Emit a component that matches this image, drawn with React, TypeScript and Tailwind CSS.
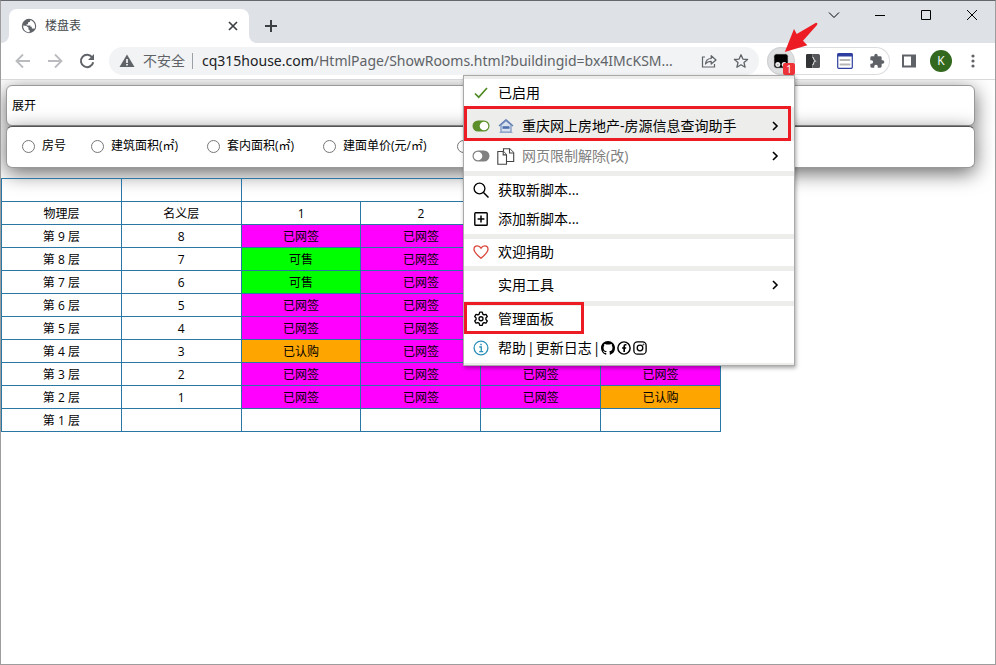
import type { ReactNode } from "react";

type Room = "sold" | "free" | "booked" | "none";

const LABEL: Record<Room, string> = { sold: "已网签", free: "可售", booked: "已认购", none: "" };
const TONE: Record<Room, string> = {
  sold: "bg-[#ff00ff]",
  free: "bg-[#00ff00]",
  booked: "bg-[#ffa500]",
  none: "",
};

const FLOORS: { floor: number; name: string; rooms: Room[] }[] = [
  { floor: 9, name: "8", rooms: ["sold", "sold", "sold", "sold"] },
  { floor: 8, name: "7", rooms: ["free", "sold", "sold", "sold"] },
  { floor: 7, name: "6", rooms: ["free", "sold", "sold", "sold"] },
  { floor: 6, name: "5", rooms: ["sold", "sold", "sold", "sold"] },
  { floor: 5, name: "4", rooms: ["sold", "sold", "sold", "sold"] },
  { floor: 4, name: "3", rooms: ["booked", "sold", "sold", "sold"] },
  { floor: 3, name: "2", rooms: ["sold", "sold", "sold", "sold"] },
  { floor: 2, name: "1", rooms: ["sold", "sold", "sold", "booked"] },
  { floor: 1, name: "", rooms: ["none", "none", "none", "none"] },
];

const FIELDS = [
  { text: "房号", width: "min-w-6" },
  { text: "建筑面积(㎡)", width: "min-w-[71px]" },
  { text: "套内面积(㎡)", width: "min-w-[71px]" },
  { text: "建面单价(元/㎡)", width: "min-w-[89px]" },
];

const CELL = "h-[23px] border border-[#2a76a4] p-0 text-center font-normal";
const CARD =
  "rounded-md border border-[#999] bg-white shadow-[0_5px_20px_rgba(0,0,0,0.6)]";

function Svg({ size, box = 16, children }: { size: string; box?: number; children: ReactNode }) {
  return (
    <svg className={`${size} shrink-0`} viewBox={`0 0 ${box} ${box}`} fill="none" stroke="currentColor" aria-hidden="true">
      {children}
    </svg>
  );
}

function TabStrip() {
  return (
    <div className="flex h-[42px] items-end bg-[#dee1e6]">
      <div className="h-2 w-2 bg-white">
        <div className="h-2 w-2 rounded-br-lg bg-[#dee1e6]" />
      </div>
      <div className="flex h-[34px] w-[240px] items-center rounded-t-lg bg-white pl-3 pr-2">
        <svg className="size-4 shrink-0" viewBox="0 0 16 16" aria-hidden="true">
          <circle cx="8" cy="8" r="7.2" fill="#5f6368" />
          <path d="M2.2 7.4 5.4 8 7.6 9.8 7.4 11.6 8.6 12v2.2C5.2 14.4 1.9 11.6 2.2 7.4ZM9.4 2 9 3.8 7 4.4v1.8H5.6v1.2h3.8v1.4h1.4v1.6h1.6l1.2.4c1.2-2.8.2-7-4.2-8.8Z" fill="#fff" />
        </svg>
        <span className="ml-2 flex-1 text-xs text-[#45474a]">楼盘表</span>
        <button type="button" aria-label="关闭标签页" className="flex size-4 items-center justify-center text-[#3c4043]">
          <Svg size="size-[10px]" box={10}>
            <path d="m1 1 8 8M9 1 1 9" strokeWidth="1.7" />
          </Svg>
        </button>
      </div>
      <div className="h-2 w-2 bg-white">
        <div className="h-2 w-2 rounded-bl-lg bg-[#dee1e6]" />
      </div>
      <button type="button" aria-label="新标签页" className="ml-2 flex h-[34px] w-3 items-center justify-center text-[#3c4043]">
        <Svg size="size-3" box={12}>
          <path d="M6 0v12M0 6h12" strokeWidth="2" />
        </Svg>
      </button>
      <div className="ml-auto flex self-start text-black">
        <button type="button" aria-label="搜索标签页" className="flex h-7 w-[46px] items-center justify-center">
          <Svg size="size-3" box={12}>
            <path d="m1 3.5 5 5 5-5" />
          </Svg>
        </button>
        <button type="button" aria-label="最小化" className="flex h-7 w-[46px] items-center justify-center">
          <Svg size="size-[10px]" box={10}>
            <path d="M0 5.5h10" />
          </Svg>
        </button>
        <button type="button" aria-label="最大化" className="flex h-7 w-[46px] items-center justify-center">
          <Svg size="size-[10px]" box={10}>
            <path d="M.5.5h9v9h-9z" />
          </Svg>
        </button>
        <button type="button" aria-label="关闭" className="flex h-7 w-[46px] items-center justify-center">
          <Svg size="size-[10px]" box={10}>
            <path d="m0 0 10 10M10 0 0 10" />
          </Svg>
        </button>
      </div>
    </div>
  );
}

function Chevron() {
  return (
    <span className="ml-auto mr-[14px] flex">
      <Svg size="size-[10px]" box={10}>
        <path d="m3 1 4 4-4 4" strokeWidth="1.6" />
      </Svg>
    </span>
  );
}

function Toggle({ on }: { on?: boolean }) {
  return (
    <svg className="h-3 w-[18px] shrink-0" viewBox="0 0 18 12" aria-hidden="true">
      <rect x=".5" y=".5" width="17" height="11" rx="5.5" fill={on ? "#5a8f29" : "#808080"} />
      <circle cx={on ? 12 : 6} cy="6" r="4.3" fill="#fff" />
    </svg>
  );
}

const ITEM = "flex w-full items-center text-left";
const RULE = "h-[5px] border-0 bg-[#ededeb]";

function ScriptMenu() {
  return (
    <div className="absolute right-0 top-full z-20 w-[332px] border border-[#aaa] bg-white text-sm leading-5 text-black shadow-[1px_2px_4px_rgba(0,0,0,0.35)]">
      <div className="h-[3px] bg-[#ededeb]" />
      <button type="button" className={`${ITEM} h-7 gap-[10px] pl-[10px]`}>
        <span className="text-[#4f8a24]">
          <Svg size="size-[14px]" box={14}>
            <path d="m1 7.5 3.7 3.7L13 2" strokeWidth="1.7" />
          </Svg>
        </span>
        已启用
      </button>
      <button type="button" className={`${ITEM} relative h-[34px] bg-[#ededeb] pl-2 pt-1`}>
        <Toggle on />
        <svg className="ml-2 size-4 shrink-0" viewBox="0 0 16 16" fill="none" aria-hidden="true">
          <path d="M3 6.800v7.400h10V6.800L8 2.500z" fill="#d9e1ee" stroke="#7f98c4" strokeWidth="1.300" strokeLinejoin="round" />
          <path d="M1 8 8 1.800 15 8" stroke="#6582b5" strokeWidth="1.500" strokeLinejoin="round" />
          <path d="M4.500 9.500h7" stroke="#4d70ad" strokeWidth="2.600" />
          <path d="M1.500 14.500h13" stroke="#8fa5cb" />
        </svg>
        <span className="ml-2">重庆网上房地产-房源信息查询助手</span>
        <Chevron />
        <span className="pointer-events-none absolute -top-px left-0 h-[35px] w-[327px] border-[3px] border-[#ed1c24]" />
      </button>
      <button type="button" className={`${ITEM} h-[30px] pl-2`}>
        <Toggle />
        <svg className="ml-[7px] h-[17px] w-[18px] shrink-0" viewBox="0 0 18 17" fill="#fff" stroke="#444" strokeWidth="1.1" aria-hidden="true">
          <path d="M6.500.8h6.200l4 4v8.700H6.500z" />
          <path d="M12.500.8v4.200h4.200" />
          <path d="M.8 3.500h5.500l3.200 3.300v9.400H.8z" />
          <path d="M6.200 3.500v3.400h3.300" />
        </svg>
        <span className="ml-[7px] text-[#808080]">网页限制解除(改)</span>
        <Chevron />
      </button>
      <hr className={RULE} />
      <button type="button" className={`${ITEM} h-[29px] gap-[9px] pb-0.5 pl-[9px]`}>
        <Svg size="size-4">
          <circle cx="6.5" cy="6.5" r="5.4" strokeWidth="1.3" />
          <path d="m10.500 10.500 5 5" strokeWidth="1.5" />
        </Svg>
        获取新脚本...
      </button>
      <button type="button" className={`${ITEM} h-[29px] gap-[9px] pb-0.5 pl-[9px]`}>
        <Svg size="size-4">
          <rect x="1.8" y="1.8" width="12.4" height="12.4" rx=".8" strokeWidth="1.4" />
          <path d="M8 4.600v6.800M4.600 8h6.800" strokeWidth="1.5" />
        </Svg>
        添加新脚本...
      </button>
      <hr className={RULE} />
      <button type="button" className={`${ITEM} h-[27px] gap-[9px] pb-0.5 pl-[9px]`}>
        <span className="text-[#d9453a]">
          <Svg size="size-4">
            <path d="M8 14.200C4.500 11.200 1 8.500 1 5.200 1 3.200 2.500 1.800 4.300 1.800c1.600 0 2.900.9 3.700 2.300.8-1.400 2.100-2.300 3.700-2.300C13.500 1.800 15 3.200 15 5.200c0 3.300-3.500 6-7 9Z" strokeWidth="1.3" />
          </Svg>
        </span>
        欢迎捐助
      </button>
      <hr className={RULE} />
      <button type="button" className={`${ITEM} h-[30px] pb-0.5 pl-[34px]`}>
        实用工具
        <Chevron />
      </button>
      <hr className={RULE} />
      <button type="button" className={`${ITEM} relative h-7 gap-[9px] pb-0.5 pl-[9px]`}>
        <Svg size="size-4">
          <path d="M6.700 1.200h2.600l.5 1.900 1.300.8 1.900-.6 1.300 2.300-1.400 1.300v1.700l1.400 1.300-1.300 2.300-1.900-.6-1.300.8-.5 1.900H6.700l-.5-1.900-1.300-.8-1.900.6-1.300-2.300 1.400-1.300V6.900L1.700 5.600 3 3.300l1.900.6 1.300-.8z" strokeWidth="1.3" strokeLinejoin="round" />
          <circle cx="8" cy="7.75" r="2" strokeWidth="1.3" />
        </Svg>
        管理面板
        <span className="pointer-events-none absolute -top-1 left-0 h-8 w-[120px] border-[3px] border-[#ed1c24]" />
      </button>
      <div className={`${ITEM} h-[29px] pb-0.5 pl-[9px]`}>
        <span className="mr-[9px] text-[#2b8fb8]">
          <Svg size="size-4">
            <circle cx="8" cy="8" r="6.9" strokeWidth="1.3" />
            <path d="M6.300 7H8.300v4.500M6.200 11.700h4" strokeWidth="1.3" />
            <path d="M7.300 4.500h1.500" strokeWidth="1.5" />
          </Svg>
        </span>
        <a href="#help">帮助</a>
        <span className="mx-px">|</span>
        <a href="#changelog">更新日志</a>
        <span className="mx-px">|</span>
        <span className="flex gap-0.5">
          <a href="#github" aria-label="GitHub">
            <svg className="size-[14px]" viewBox="0 0 16 16" fill="currentColor" aria-hidden="true">
              <path d="M8 0C3.580 0 0 3.580 0 8c0 3.540 2.290 6.530 5.470 7.590.4.070.55-.17.55-.38 0-.19-.01-.82-.01-1.490-2.010.37-2.530-.49-2.690-.94-.09-.23-.48-.94-.82-1.130-.28-.15-.68-.52-.01-.53.63-.01 1.080.58 1.230.82.72 1.210 1.870.87 2.330.66.070-.52.28-.87.51-1.070-1.780-.2-3.640-.89-3.640-3.950 0-.87.31-1.590.82-2.150-.08-.2-.36-1.020.08-2.120 0 0 .67-.21 2.200.82.640-.18 1.320-.27 2-.27s1.360.09 2 .27c1.530-1.040 2.200-.82 2.200-.82.44 1.100.16 1.920.08 2.120.51.56.82 1.270.82 2.150 0 3.070-1.870 3.750-3.650 3.950.29.25.54.73.54 1.480 0 1.070-.01 1.930-.01 2.200 0 .21.15.46.55.38A8.010 8.010 0 0 0 16 8c0-4.420-3.580-8-8-8Z" />
            </svg>
          </a>
          <a href="#facebook" aria-label="Facebook">
            <Svg size="size-[14px]">
              <circle cx="8" cy="8" r="7" strokeWidth="1.7" />
              <path d="M10.800 4.300H9.700c-1 0-1.500.6-1.500 1.600v6.800M5.800 8h4.700" strokeWidth="1.9" />
            </Svg>
          </a>
          <a href="#instagram" aria-label="Instagram">
            <Svg size="size-[14px]">
              <rect x="1" y="1" width="14" height="14" rx="4" strokeWidth="1.5" />
              <circle cx="8" cy="8" r="3.2" strokeWidth="1.5" />
              <circle cx="12" cy="4" r=".6" strokeWidth=".8" />
            </Svg>
          </a>
        </span>
      </div>
      <div className="h-0.5 bg-[#ededeb]" />
    </div>
  );
}

function Toolbar() {
  return (
    <div className="flex h-[37px] items-center border-b border-[#d8d9db] bg-white pr-[14px] text-[#5f6368]">
      <button type="button" aria-label="后退" className="ml-[14px] text-[#b9bbbe]">
        <Svg size="size-4">
          <path d="M15 8H2M8 1.500 1.500 8 8 14.500" strokeWidth="1.8" />
        </Svg>
      </button>
      <button type="button" aria-label="前进" className="ml-4 text-[#b9bbbe]">
        <Svg size="size-4">
          <path d="M1 8h13M8 1.500 14.500 8 8 14.500" strokeWidth="1.8" />
        </Svg>
      </button>
      <button type="button" aria-label="重新加载" className="ml-4">
        <Svg size="size-4">
          <path d="M13.300 4.500A6.200 6.200 0 1 0 14.200 9.200" strokeWidth="2" />
          <path d="M15 1v6H9z" fill="currentColor" stroke="none" />
        </Svg>
      </button>
      <div className="ml-[14px] flex h-7 min-w-0 flex-1 items-center rounded-full bg-[#f1f3f4] px-[10px] text-sm">
        <svg className="size-4 shrink-0" viewBox="0 0 16 16" aria-hidden="true">
          <path d="M8 1.500 15.500 14H.5z" fill="#5f6368" />
          <path d="M8 6v4M8 11v1.600" stroke="#fff" strokeWidth="1.6" />
        </svg>
        <span className="ml-2 shrink-0">不安全</span>
        <span className="ml-[7px] h-4 w-px bg-[#9aa0a6]" />
        <span className="ml-[9px] min-w-0 flex-1 whitespace-nowrap font-['Noto_Sans','Noto_Sans_CJK_SC',sans-serif]">
          <span className="text-[#202124]">cq315house.com</span>
          /HtmlPage/ShowRooms.html?buildingid=bx4IMcKSM...
        </span>
        <button type="button" aria-label="分享">
          <Svg size="size-4">
            <path d="M4 4H1.500v10h12v-3" strokeWidth="1.2" />
            <path d="M4.500 11c.3-3.500 2.500-5.400 5.700-5.500V2.700L15 7l-4.800 4V8.400C7.600 8.300 5.800 9.200 4.500 11Z" strokeWidth="1.2" strokeLinejoin="round" />
          </Svg>
        </button>
        <button type="button" aria-label="加入书签" className="ml-4">
          <Svg size="size-4">
            <path d="m8 1.800 1.900 4.300 4.700.4-3.600 3.100 1.100 4.600L8 11.800l-4.100 2.400L5 9.600 1.400 6.500l4.700-.4z" strokeWidth="1.3" strokeLinejoin="round" />
          </Svg>
        </button>
      </div>
      <div className="ml-2 flex h-7 items-center rounded-full shadow-[inset_0_0_0_1px_#dadce0]">
        <div className="relative">
          <button type="button" aria-label="脚本管理器" className="relative flex size-7 items-center justify-center rounded-full border border-[#cfd0d2] bg-[#dedfe0]">
            <svg className="size-4" viewBox="0 0 16 16" aria-hidden="true">
              <rect x=".8" y=".8" width="14.4" height="14.4" rx="2.500" fill="#000" stroke="#f4f4f4" strokeWidth=".8" />
              <circle cx="4.800" cy="11.400" r="2.500" fill="#ececec" />
              <circle cx="11.200" cy="11.400" r="2.500" fill="#ececec" />
              <circle cx="4.800" cy="11.800" r=".8" fill="#999" />
              <circle cx="11.200" cy="11.800" r=".8" fill="#999" />
            </svg>
            <span className="absolute -bottom-px -right-px flex h-3 w-3 items-center justify-center rounded-xs bg-[#ee3338] text-[10px] leading-3 text-white">1</span>
          </button>
          <svg className="pointer-events-none absolute bottom-[23px] left-[17px] z-30 h-[30px] w-[34px]" viewBox="0 0 34 30" aria-hidden="true">
            <path d="M.8 30 10 7l2.700 5L32 .8q2 0 1 2.200L19 18.700l4.300 4.500z" fill="#ed1c24" />
          </svg>
          <ScriptMenu />
        </div>
        <button type="button" aria-label="扩展一" className="ml-[10px]">
          <svg className="size-4" viewBox="0 0 16 16" aria-hidden="true">
            <rect x="1" y="1" width="14" height="14" rx="1.500" fill="#55575a" />
            <path d="M2.500 1H8v3.500l2.800 3.700L7.500 11.500V15h-5A1.500 1.500 0 0 1 1 13.500v-11A1.500 1.500 0 0 1 2.500 1Z" fill="#333436" />
            <path d="M7.300 4.300c1 0 1.300.5 1.300 1.300s.6 1.700 1.900 2.500c-1.300.6-1.900 1.300-1.900 2.200s-.4 1.400-1.300 1.500" fill="none" stroke="#e4e4e4" strokeWidth="1.1" />
            <path d="M7.500 1v3M7.500 12v3" stroke="#bbb" strokeWidth=".5" />
          </svg>
        </button>
        <button type="button" aria-label="扩展二" className="ml-4">
          <svg className="size-4" viewBox="0 0 16 16" aria-hidden="true">
            <rect x=".7" y=".7" width="14.6" height="14.6" rx="1" fill="#fff" stroke="#2f3f9f" strokeWidth="1.2" />
            <path d="M.5.500h15v3H.5z" fill="#2f3f9f" />
            <path d="M3.500 7h9M3.500 11.500h9" stroke="#b5b5b5" strokeWidth="2" strokeLinecap="round" />
          </svg>
        </button>
        <button type="button" aria-label="扩展程序" className="ml-4 mr-[5px]">
          <svg className="size-4" viewBox="0 0 24 24" fill="#5f6368" aria-hidden="true">
            <path d="M20.500 11H19V7a2 2 0 0 0-2-2h-4V3.500a2.500 2.500 0 0 0-5 0V5H4a2 2 0 0 0-2 2v3.800h1.500a2.700 2.700 0 0 1 0 5.400H2V20a2 2 0 0 0 2 2h3.800v-1.500a2.700 2.700 0 0 1 5.400 0V22H17a2 2 0 0 0 2-2v-4h1.500a2.500 2.500 0 0 0 0-5Z" />
          </svg>
        </button>
      </div>
      <button type="button" aria-label="侧边栏" className="ml-[11px]">
        <Svg size="size-4">
          <path d="M2 2.500h12v11H2z" strokeWidth="2" />
          <path d="M10 2h5v12h-5z" fill="currentColor" stroke="none" />
        </Svg>
      </button>
      <button type="button" aria-label="用户" className="ml-[13px] flex size-[22px] items-center justify-center rounded-full bg-[#33691e] text-xs text-white">
        K
      </button>
      <button type="button" aria-label="更多" className="ml-[13px]">
        <svg className="size-4" viewBox="0 0 16 16" fill="#5f6368" aria-hidden="true">
          <circle cx="8" cy="3" r="1.6" />
          <circle cx="8" cy="8" r="1.6" />
          <circle cx="8" cy="13" r="1.6" />
        </svg>
      </button>
    </div>
  );
}

function RoomTable() {
  return (
    <table className="relative w-[720px] table-fixed border-collapse">
      <thead>
        <tr>
          <th className={CELL} />
          <th className={CELL} />
          <th className={CELL} colSpan={4} />
        </tr>
        <tr>
          {["物理层", "名义层", "1", "2", "3", "4"].map((h) => (
            <th key={h} className={`${CELL} pt-0.5`}>{h}</th>
          ))}
        </tr>
      </thead>
      <tbody>
        {FLOORS.map((f) => (
          <tr key={f.floor}>
            <td className={`${CELL} pt-0.5`}>第 {f.floor} 层</td>
            <td className={`${CELL} pt-0.5`}>{f.name}</td>
            {f.rooms.map((r, i) => (
              <td key={i} className={`${CELL} pt-0.5 ${TONE[r]}`}>{LABEL[r]}</td>
            ))}
          </tr>
        ))}
      </tbody>
    </table>
  );
}

export default function App() {
  return (
    <div className="flex min-h-screen flex-col border border-[#9d9d9d] border-t-[#66676b] bg-white font-['Open_Sans','Noto_Sans_CJK_SC',sans-serif] text-xs text-black">
      <TabStrip />
      <Toolbar />
      <main className="flex-1 overflow-hidden pt-[5px]">
        <section className={`${CARD} ml-[5px] mr-5 flex h-[41px] items-center px-[5px]`}>
          <button type="button">展开</button>
        </section>
        <form className={`${CARD} ml-[5px] mr-5 flex h-[42px] items-center gap-[25px] border-t-[#555] pb-0.5 pl-[15px]`}>
          {FIELDS.map((f) => (
            <label key={f.text} className="flex items-center gap-[7px]">
              <input type="radio" name="field" className="m-0 size-[13px]" />
              <span className={f.width}>{f.text}</span>
            </label>
          ))}
          <input type="radio" name="field" aria-label="总价" className="m-0 size-[13px]" />
        </form>
        <div className="pt-[10px]">
          <RoomTable />
        </div>
      </main>
    </div>
  );
}
